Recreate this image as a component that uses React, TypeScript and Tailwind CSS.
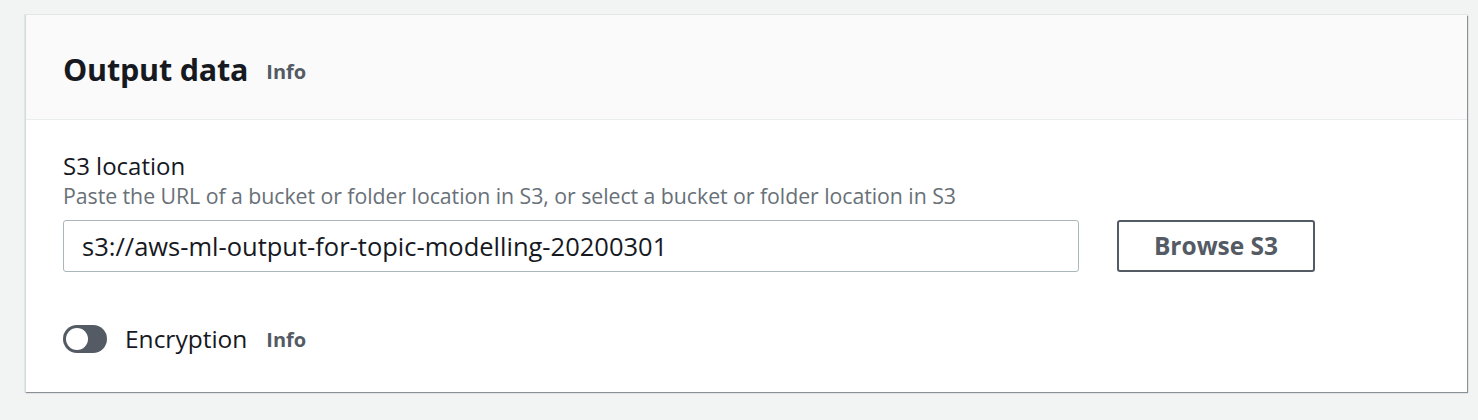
export default function App() {
  return (
    <div className="min-h-[420px] w-[1478px] bg-[#f2f3f3] pt-[15px] pl-[25px] font-['Open_Sans',sans-serif]">
      <div className="w-[1442px] h-[377px] bg-white border-l border-[#d5dbdb] shadow-[1px_1px_1px_0_#879196,0_0_0_1px_#e3e6e6]">
        <div className="h-[105px] bg-[#fafafa] border-b border-[#eaeded] pl-[37px] flex items-center pt-[3px]">
          <h2 className="text-[30.5px] leading-[40px] font-bold text-[#16191f] tracking-[-0.2px]">Output data</h2>
          <span className="ml-[18px] mt-[6px] text-[20px] font-bold text-[#545b64]">Info</span>
        </div>
        <div className="pl-[37px] pt-[31px]">
          <div className="text-[24px] leading-[30px] text-[#16191f]">S3 location</div>
          <div className="text-[21.3px] leading-[26px] mt-[2px] text-[#687078] tracking-[-0.05px]">
            Paste the URL of a bucket or folder location in S3, or select a bucket or folder location in S3
          </div>
          <div className="flex items-center mt-[11px]">
            <input
              readOnly
              value="s3://aws-ml-output-for-topic-modelling-20200301"
              className="w-[1016px] h-[52px] border border-[#aab7b8] rounded-[3px] px-[18px] text-[25.5px] text-[#16191f] outline-none font-['Open_Sans',sans-serif]"
            />
            <button className="ml-[38px] w-[198px] h-[52px] border-2 border-[#545b64] rounded-[3px] text-[24.5px] font-bold text-[#545b64]">
              Browse S3
            </button>
          </div>
          <div className="flex items-center mt-[51px]">
            <div className="w-[44px] h-[28px] rounded-full bg-[#545b64] flex items-center pl-[3px]">
              <div className="w-[22px] h-[22px] rounded-full bg-white" />
            </div>
            <span className="ml-[18px] text-[24.5px] leading-[30px] text-[#16191f]">Encryption</span>
            <span className="ml-[19px] mt-[2px] text-[20px] font-bold text-[#545b64]">Info</span>
          </div>
        </div>
      </div>
    </div>
  );
}
